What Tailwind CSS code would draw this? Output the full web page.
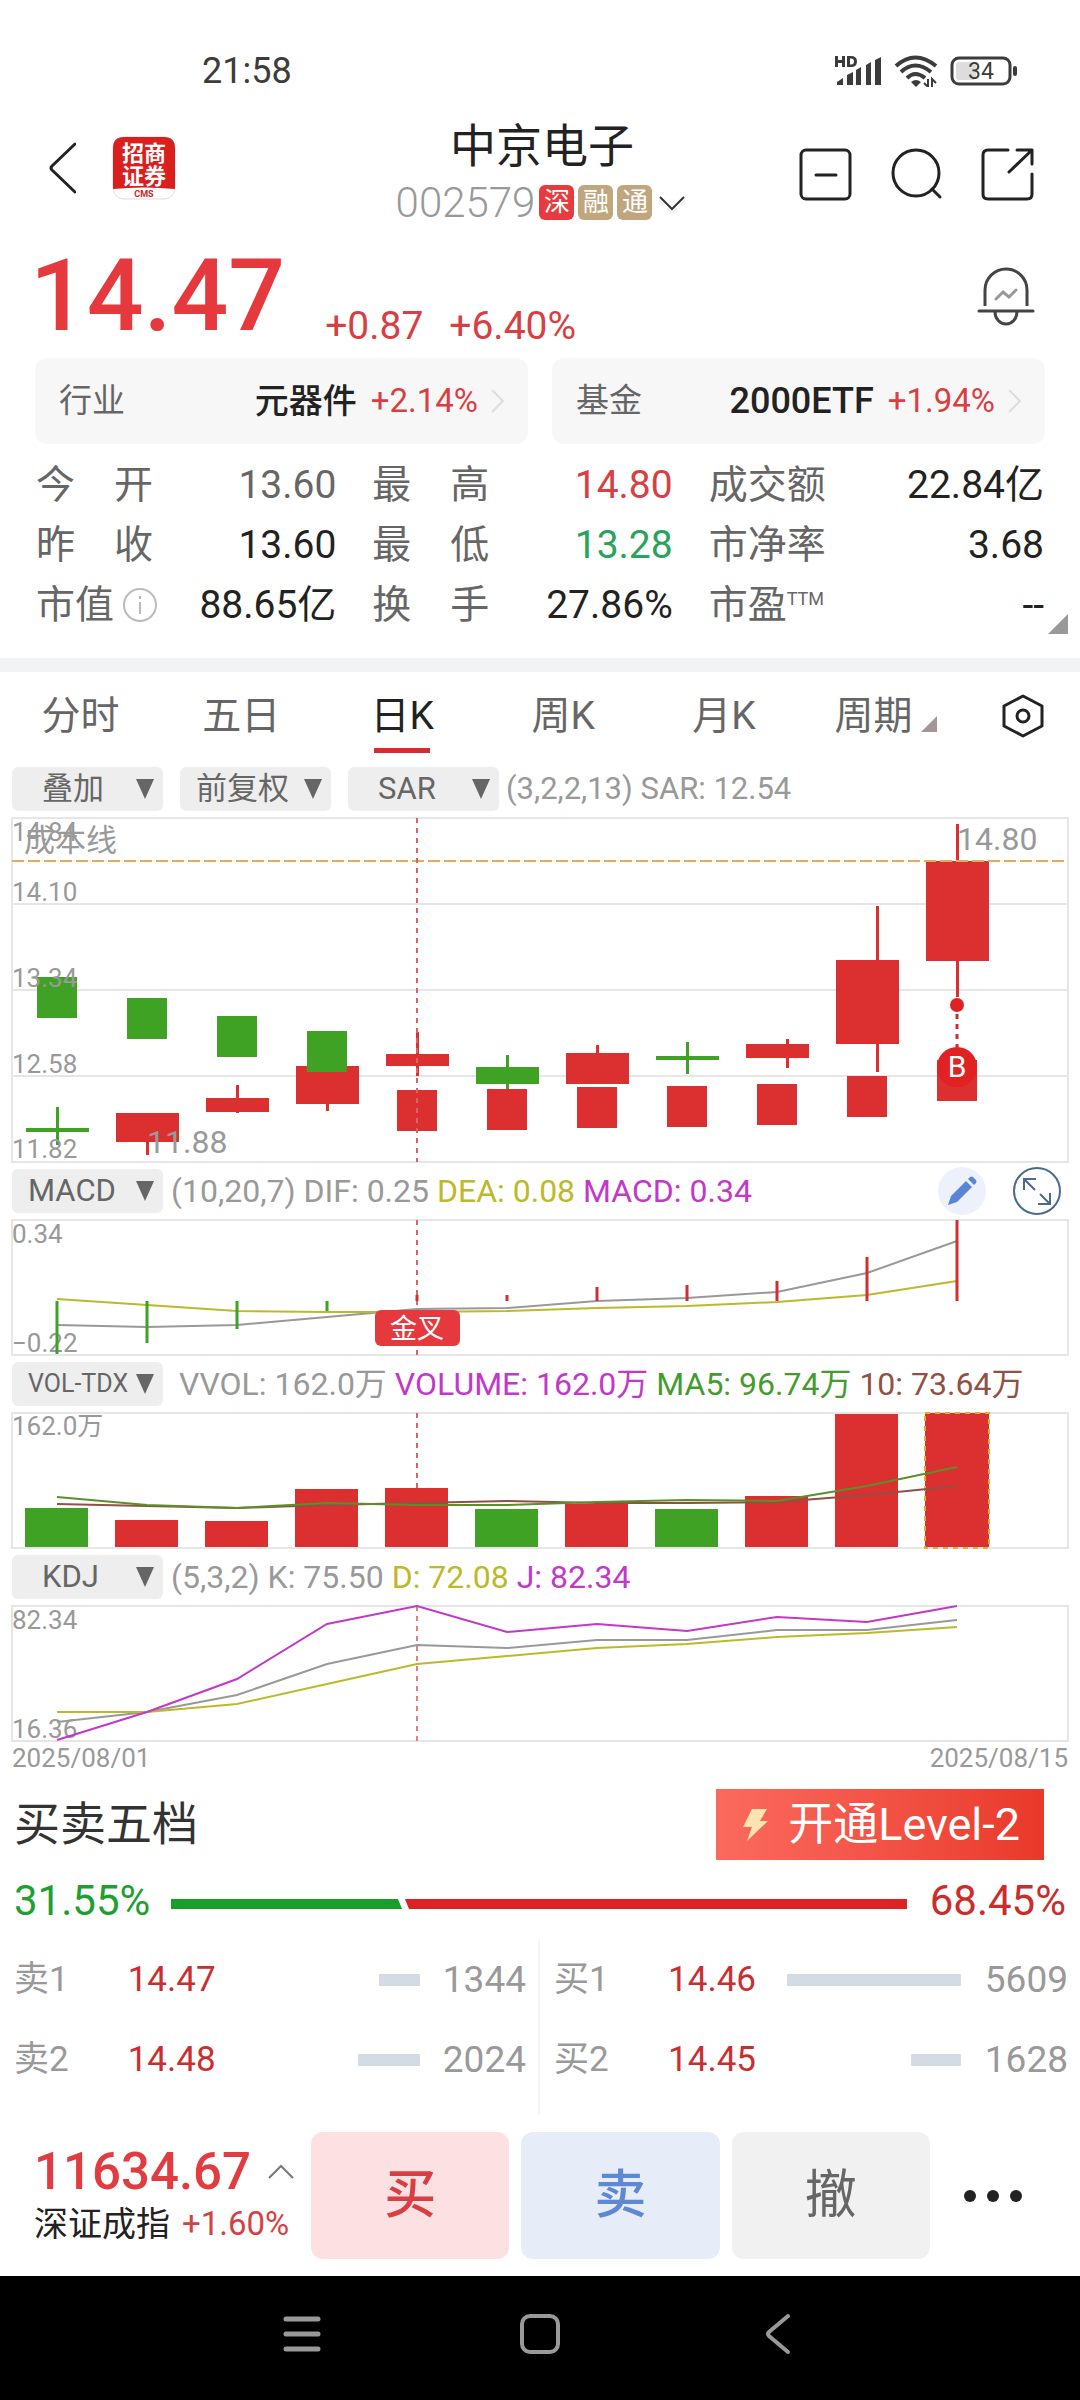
<!DOCTYPE html>
<html lang="zh-CN">
<head>
    <meta charset="UTF-8">
    <meta name="viewport" content="width=device-width, initial-scale=1.0">
    <title>中京电子 002579</title>
    <script src="https://cdn.jsdelivr.net/npm/@tailwindcss/browser@4"></script>
</head>
<body class="bg-white font-[Roboto,'Noto_Sans_CJK_SC',sans-serif] text-[#222]">
<div class="flex min-h-screen flex-col">

    <!-- 状态栏 -->
    <div class="flex h-[114px] items-center justify-between pt-7 pr-[60px] pl-[202px] text-[#3c3c3c]">
        <span class="text-4xl">21:58</span>
        <div class="flex items-center gap-3">
            <svg class="h-8 w-12" viewBox="0 0 48 32" fill="currentColor">
                <path d="M1 1h3v4h4V1h3v11H8V8H4v4H1zM13 1h4q6 0 6 5.500t-6 5.500h-4zM16 3.500v6h1q3 0 3-3t-3-3z"/>
                <path d="M3 30v-3l6-4v7zM13 30V20l6-3v13zM22 30V15l5-3v18zM32 30V10l5-3v23zM41 30V5l6-3v28z"/>
            </svg>
            <svg class="h-8 w-11" viewBox="0 0 44 32" fill="none" stroke="currentColor" stroke-width="4">
                <path d="M2 11q19-17 40 0M7 17q14-13 30 0M13 23q8-8 18 0"/>
                <path d="M17 27q5-4 10 0l-5 5z" fill="currentColor" stroke="none"/>
                <path d="M34 24v8l-4-4M38 32v-8l4 4" stroke-width="2"/>
            </svg>
            <svg class="h-8 w-[70px]" viewBox="0 0 70 32">
                <rect x="2" y="3" width="58" height="26" rx="7" fill="none" stroke="currentColor" stroke-width="3"/>
                <rect x="6" y="7" width="20" height="18" rx="3" fill="#ddd"/>
                <rect x="63" y="11" width="4" height="10" rx="2" fill="currentColor"/>
                <text x="31" y="24" text-anchor="middle" font-size="23" fill="currentColor">34</text>
            </svg>
        </div>
    </div>

    <!-- 顶部标题 -->
    <header class="grid h-30 grid-cols-[1fr_auto_1fr] items-center pr-11 pl-12">
        <div class="flex items-center gap-9 pb-3">
            <button type="button" aria-label="返回">
                <svg class="h-14 w-7" viewBox="0 0 28 56" fill="none" stroke="#222" stroke-width="3" stroke-linecap="round" stroke-linejoin="round"><path d="M27 4L4 26q-2 2 0 4l23 22"/></svg>
            </button>
            <svg class="size-16" viewBox="0 0 64 64" aria-label="招商证券">
                <rect x="1" y="1" width="62" height="62" rx="11" fill="#fff" stroke="#ddd"/>
                <path d="M1 53V12Q1 1 12 1h40q11 0 11 11v41q-31-3-62 0z" fill="#da1f1f"/>
                <text x="32" y="25" text-anchor="middle" font-size="22" font-weight="700" fill="#fff">招商</text>
                <text x="32" y="48" text-anchor="middle" font-size="22" font-weight="700" fill="#fff">证券</text>
                <text x="32" y="61" text-anchor="middle" font-size="9" font-weight="700" fill="#c22">CMS</text>
            </svg>
        </div>
        <div class="flex flex-col items-center">
            <h1 class="text-[46px] leading-14">中京电子</h1>
            <button type="button" class="flex h-14 items-center gap-1">
                <span class="text-[42px] font-light text-[#999]">002579</span>
                <span class="flex size-[35px] items-center justify-center rounded-md bg-[#e63c40] text-[26px] text-white">深</span>
                <span class="flex size-[35px] items-center justify-center rounded-md bg-[#bfa67e] text-[26px] text-white">融</span>
                <span class="flex size-[35px] items-center justify-center rounded-md bg-[#bfa67e] text-[26px] text-white">通</span>
                <svg class="h-7 w-8" viewBox="0 0 32 28" fill="none" stroke="#333" stroke-width="2"><path d="M4 9l12 12L28 9"/></svg>
            </button>
        </div>
        <div class="flex items-center justify-end gap-[35px]">
            <button type="button" aria-label="删自选">
                <svg class="size-14" viewBox="0 0 56 56" fill="none" stroke="#222" stroke-width="3" stroke-linecap="round"><rect x="3" y="4" width="49" height="49" rx="5"/><path d="M18 29h20"/></svg>
            </button>
            <button type="button" aria-label="搜索">
                <svg class="size-14" viewBox="0 0 56 56" fill="none" stroke="#222" stroke-width="3" stroke-linecap="round"><circle cx="27" cy="27" r="23"/><path d="M43 43l8 8"/></svg>
            </button>
            <button type="button" aria-label="分享">
                <svg class="size-14" viewBox="0 0 56 56" fill="none" stroke="#222" stroke-width="3" stroke-linecap="round" stroke-linejoin="round"><path d="M28 4H8q-5 0-5 5v39q0 5 5 5h39q5 0 5-5V28M37 4h15v14M52 4L29 26"/></svg>
            </button>
        </div>
    </header>

    <!-- 现价 -->
    <section class="flex h-[124px] items-center justify-between pr-11 pl-[30px]">
        <div class="flex items-end text-[#e6393e]">
            <strong class="text-[100px] leading-[124px] font-medium">14.47</strong>
            <span class="pb-2 pl-10 text-[39px] leading-12 text-[#d83f43]">+0.87</span>
            <span class="pb-2 pl-[26px] text-[39px] leading-12 text-[#d83f43]">+6.40%</span>
        </div>
        <button type="button" aria-label="预警">
            <svg class="h-15 w-[60px]" viewBox="0 0 60 60" fill="none" stroke="#444" stroke-width="3" stroke-linecap="round"><path d="M9 40V24a21 21 0 0 1 42 0v16" stroke-linecap="butt"/><path d="M3 45h54M19 46a11 12 0 0 0 22 0"/><path d="M20 33l7-7 6 5 7-7" stroke="#999"/></svg>
        </button>
    </section>

    <!-- 行业 / 基金 -->
    <section class="grid grid-cols-2 gap-6 px-[35px]">
        <a href="#" class="flex h-[86px] items-center rounded-xl bg-[#f7f7f7] pr-[22px] pl-6">
            <span class="mr-auto text-[33px] text-[#666]">行业</span>
            <span class="text-[34px] font-medium">元器件</span>
            <span class="pl-[14px] text-[33px] text-[#d83f43]">+2.14%</span>
            <svg class="ml-3 h-7 w-4" viewBox="0 0 16 28" fill="none" stroke="#ddd" stroke-width="2"><path d="M2 3l11 11L2 25"/></svg>
        </a>
        <a href="#" class="flex h-[86px] items-center rounded-xl bg-[#f7f7f7] pr-[22px] pl-6">
            <span class="mr-auto text-[33px] text-[#666]">基金</span>
            <span class="text-[36px] font-medium">2000ETF</span>
            <span class="pl-[14px] text-[33px] text-[#d83f43]">+1.94%</span>
            <svg class="ml-3 h-7 w-4" viewBox="0 0 16 28" fill="none" stroke="#ddd" stroke-width="2"><path d="M2 3l11 11L2 25"/></svg>
        </a>
    </section>

    <!-- 行情指标 -->
    <section class="relative px-9 pt-[11px] pb-[23px]">
        <dl class="grid grid-cols-[301fr_301fr_336fr] gap-x-9 text-[39px] leading-[60px]">
            <div class="flex justify-between"><dt class="flex w-[117px] justify-between text-[#666]"><span>今</span><span>开</span></dt><dd class="text-[#666]">13.60</dd></div>
            <div class="flex justify-between"><dt class="flex w-[117px] justify-between text-[#666]"><span>最</span><span>高</span></dt><dd class="text-[#d83f43]">14.80</dd></div>
            <div class="flex justify-between"><dt class="text-[#666]">成交额</dt><dd>22.84亿</dd></div>
            <div class="flex justify-between"><dt class="flex w-[117px] justify-between text-[#666]"><span>昨</span><span>收</span></dt><dd>13.60</dd></div>
            <div class="flex justify-between"><dt class="flex w-[117px] justify-between text-[#666]"><span>最</span><span>低</span></dt><dd class="text-[#27a35c]">13.28</dd></div>
            <div class="flex justify-between"><dt class="text-[#666]">市净率</dt><dd>3.68</dd></div>
            <div class="flex justify-between">
                <dt class="flex items-center gap-2 text-[#666]">市值
                    <svg class="size-9" viewBox="0 0 36 36" fill="none" stroke="#bbb" stroke-width="2"><circle cx="18" cy="18" r="16"/><path d="M18 15v12M18 9v3"/></svg>
                </dt>
                <dd>88.65亿</dd>
            </div>
            <div class="flex justify-between"><dt class="flex w-[117px] justify-between text-[#666]"><span>换</span><span>手</span></dt><dd>27.86%</dd></div>
            <div class="flex justify-between"><dt class="flex text-[#666]">市盈<span class="text-[18px] leading-12">TTM</span></dt><dd>--</dd></div>
        </dl>
        <svg class="absolute right-3 bottom-6 size-5" viewBox="0 0 20 20"><path d="M20 0v20H0z" fill="#999"/></svg>
    </section>

    <div class="h-[14px] bg-[#f2f3f5]"></div>

    <!-- 周期切换 -->
    <nav class="flex h-[88px] text-[39px] text-[#666]">
        <button type="button" class="w-[14.9%]">分时</button>
        <button type="button" class="w-[14.9%]">五日</button>
        <button type="button" class="relative w-[14.9%] text-[#222]">日K<span class="absolute bottom-[7px] left-1/2 h-[5px] w-14 -translate-x-1/2 bg-[#d92b2b]"></span></button>
        <button type="button" class="w-[14.9%]">周K</button>
        <button type="button" class="w-[14.9%]">月K</button>
        <button type="button" class="flex flex-1 items-center justify-center gap-2">周期
            <svg class="mt-4 size-4" viewBox="0 0 16 16"><path d="M16 0v16H0z" fill="#a39797"/></svg>
        </button>
        <button type="button" class="flex w-[10.5%] items-center justify-center" aria-label="设置">
            <svg class="size-12" viewBox="0 0 48 48" fill="none" stroke="#222" stroke-width="3" stroke-linejoin="round"><path d="M24 4l19 10v20L24 44 5 34V14z"/><circle cx="24" cy="24" r="6"/></svg>
        </button>
    </nav>

    <!-- K线与指标 -->
    <section class="flex flex-col gap-[7px] px-3 pt-[7px] text-[32px] text-[#999]">
        <div class="flex h-11 items-center gap-[17px] leading-11">
            <label class="grid w-[151px] items-center rounded-md bg-[#eee] text-[31px] text-[#666]">
                <select aria-label="叠加" class="col-start-1 row-start-1 h-11 appearance-none pl-[30px]"><option>叠加</option></select>
                <svg class="pointer-events-none col-start-1 row-start-1 mr-2 h-5 w-5 justify-self-end" viewBox="0 0 20 20"><path d="M1 0h18l-9 20z" fill="#666"/></svg>
            </label>
            <label class="grid w-[151px] items-center rounded-md bg-[#eee] text-[31px] text-[#666]">
                <select aria-label="复权" class="col-start-1 row-start-1 h-11 appearance-none pl-4"><option>前复权</option></select>
                <svg class="pointer-events-none col-start-1 row-start-1 mr-2 h-5 w-5 justify-self-end" viewBox="0 0 20 20"><path d="M1 0h18l-9 20z" fill="#666"/></svg>
            </label>
            <label class="grid w-[151px] items-center rounded-md bg-[#eee] text-[31px] text-[#666]">
                <select aria-label="主图指标" class="col-start-1 row-start-1 h-11 appearance-none pl-[30px]"><option>SAR</option></select>
                <svg class="pointer-events-none col-start-1 row-start-1 mr-2 h-5 w-5 justify-self-end" viewBox="0 0 20 20"><path d="M1 0h18l-9 20z" fill="#666"/></svg>
            </label>
            <p class="-ml-[10px] text-[31px]">(3,2,2,13) SAR: 12.54</p>
        </div>

        <!-- 主图 -->
        <svg class="w-full overflow-visible" viewBox="0 0 1056 344">
            <g fill="none" stroke="#e6e6e6" stroke-width="2">
                <rect width="1056" height="344"/>
                <path d="M0 86h1056M0 172h1056M0 258h1056"/>
            </g>
            <g fill="#dc2f30">
                <path d="M104 295h63v29h-63zM194 280h63v14h-63zM284 248h63v38h-63zM374 236h63v12h-63zM554 235h63v31h-63zM734 226h63v14h-63zM824 142h63v84h-63zM914 43h63v100h-63z"/>
                <path d="M134 295h3v42h-3zM224 267h3v28h-3zM314 248h3v45h-3zM404 214h3v44h-3zM584 227h3v38h-3zM774 221h3v29h-3zM864 88h3v166h-3zM944 6h3v173h-3z"/>
                <path d="M385 272h40v41h-40zM475 271h40v41h-40zM565 269h40v41h-40zM655 268h40v41h-40zM745 266h40v41h-40zM835 258h40v41h-40zM925 242h40v41h-40z"/>
            </g>
            <g fill="#3fa225">
                <path d="M14 310h63v4H14zM464 249h63v17h-63zM644 238h63v4h-63zM44 289h3v38h-3zM494 237h3v34h-3zM674 224h3v32h-3z"/>
                <path d="M25 159h40v41H25zM115 180h40v41h-40zM205 198h40v41h-40zM295 213h40v41h-40z"/>
            </g>
            <path d="M0 43h1052" stroke="#e3ac5f" stroke-width="2" stroke-dasharray="12 4"/>
            <path d="M405 0v344" stroke="#d86464" stroke-width="2" stroke-dasharray="5 5"/>
            <path d="M945 196v34" stroke="#c8302f" stroke-width="3" stroke-dasharray="5 5"/>
            <circle cx="945" cy="187" r="7" fill="#e02222"/>
            <circle cx="945" cy="249" r="20" fill="#e02222"/>
            <text x="945" y="259" text-anchor="middle" font-size="30" fill="#fff">B</text>
            <g fill="#999" font-size="26">
                <text x="0" y="23">14.84</text>
                <text x="0" y="83">14.10</text>
                <text x="0" y="169">13.34</text>
                <text x="0" y="255">12.58</text>
                <text x="0" y="340">11.82</text>
            </g>
            <g fill="#999" font-size="32">
                <text x="12" y="33" font-size="31">成本线</text>
                <text x="135" y="335">11.88</text>
                <text x="945" y="32">14.80</text>
            </g>
        </svg>

        <div class="flex h-11 items-center gap-2 leading-11">
            <label class="grid w-[151px] items-center rounded-md bg-[#eee] text-[31px] text-[#666]">
                <select aria-label="副图指标一" class="col-start-1 row-start-1 h-11 appearance-none pl-4"><option>MACD</option></select>
                <svg class="pointer-events-none col-start-1 row-start-1 mr-2 h-5 w-5 justify-self-end" viewBox="0 0 20 20"><path d="M1 0h18l-9 20z" fill="#666"/></svg>
            </label>
            <p>(10,20,7) DIF: 0.25 <span class="text-[#bdb92a]">DEA: 0.08</span> <span class="text-[#c238c8]">MACD: 0.34</span></p>
            <div class="mr-[6px] ml-auto flex gap-[25px]">
                <button type="button" aria-label="画线">
                    <svg class="size-[50px]" viewBox="0 0 50 50"><circle cx="25" cy="25" r="24" fill="#ecf1fb"/><path d="M11 39l3-9L29 15l6 6-15 15zM31 13l2-2q2-1 3 0l3 3q1 2 0 3l-2 2z" fill="#5b86d6"/></svg>
                </button>
                <button type="button" aria-label="全屏">
                    <svg class="size-[50px]" viewBox="0 0 50 50" fill="none" stroke="#4b6b8c" stroke-width="2"><circle cx="25" cy="25" r="23"/><path d="M23 24L12 13M12 24V13h12M28 28l10 10M26 38h12V27"/></svg>
                </button>
            </div>
        </div>

        <!-- MACD -->
        <svg class="w-full overflow-visible" viewBox="0 0 1056 135">
            <rect width="1056" height="135" fill="none" stroke="#e6e6e6" stroke-width="2"/>
            <text x="0" y="23" font-size="26" fill="#999">0.34</text>
            <text x="0" y="132" font-size="26" fill="#999">−0.22</text>
            <path d="M405 0v135" stroke="#d86464" stroke-width="2" stroke-dasharray="5 5"/>
            <g fill="none" stroke-width="2">
                <path d="M45 105L135 107 225 105 315 97 405 89 495 88 585 81 675 78 765 72 855 53 945 21" stroke="#999"/>
                <path d="M45 79L135 85 225 91 315 92 405 92 495 91 585 88 675 86 765 82 855 75 945 61" stroke="#bdb92a"/>
            </g>
            <g fill="none" stroke-width="3">
                <path d="M45 81v53M135 81v42M225 81v28M315 81v10" stroke="#3fa225"/>
                <path d="M405 81v-6M495 81v-6M585 81V67M675 81V65M765 81V61M855 81V37M945 81V0" stroke="#d03030"/>
            </g>
            <rect x="363" y="90" width="85" height="36" rx="6" fill="#e6393e"/>
            <text x="405" y="118" text-anchor="middle" font-size="27" fill="#fff">金叉</text>
        </svg>

        <div class="flex h-11 items-center gap-4 leading-11">
            <label class="grid w-[151px] items-center rounded-md bg-[#eee] text-[25px] text-[#666]">
                <select aria-label="副图指标二" class="col-start-1 row-start-1 h-11 appearance-none pl-4"><option>VOL-TDX</option></select>
                <svg class="pointer-events-none col-start-1 row-start-1 mr-2 h-5 w-5 justify-self-end" viewBox="0 0 20 20"><path d="M1 0h18l-9 20z" fill="#666"/></svg>
            </label>
            <p>VVOL: 162.0万 <span class="text-[#c238c8]">VOLUME: 162.0万</span> <span class="text-[#459b2e]">MA5: 96.74万</span> <span class="text-[#8f5143]">10: 73.64万</span></p>
        </div>

        <!-- 成交量 -->
        <svg class="w-full overflow-visible" viewBox="0 0 1056 135">
            <rect width="1056" height="135" fill="none" stroke="#e6e6e6" stroke-width="2"/>
            <text x="0" y="22" font-size="26" fill="#999">162.0万</text>
            <path d="M405 0v75" stroke="#d86464" stroke-width="2" stroke-dasharray="5 5"/>
            <path d="M13 95h63v39H13zM463 96h63v38h-63zM643 96h63v38h-63z" fill="#3fa225"/>
            <path d="M103 107h63v27h-63zM193 108h63v26h-63zM283 76h63v58h-63zM373 75h63v59h-63zM553 91h63v43h-63zM733 83h63v51h-63zM823 1h63v133h-63zM913 0h64v134h-64z" fill="#dc2f30"/>
            <rect x="913" y="0" width="64" height="135" fill="none" stroke="#dfae35" stroke-width="2" stroke-dasharray="5 5"/>
            <g fill="none" stroke-width="2">
                <path d="M45 91L135 93 225 95 315 92 405 90 495 88 585 90 675 90 765 89 855 82 945 73" stroke="#8f5143"/>
                <path d="M45 84L135 92 225 95 315 90 405 92 495 92 585 89 675 87 765 88 855 73 945 54" stroke="#5c8f2a"/>
            </g>
        </svg>

        <div class="flex h-11 items-center gap-2 leading-11">
            <label class="grid w-[151px] items-center rounded-md bg-[#eee] text-[31px] text-[#666]">
                <select aria-label="副图指标三" class="col-start-1 row-start-1 h-11 appearance-none pl-[30px]"><option>KDJ</option></select>
                <svg class="pointer-events-none col-start-1 row-start-1 mr-2 h-5 w-5 justify-self-end" viewBox="0 0 20 20"><path d="M1 0h18l-9 20z" fill="#666"/></svg>
            </label>
            <p>(5,3,2) K: 75.50 <span class="text-[#bdb92a]">D: 72.08</span> <span class="text-[#c238c8]">J: 82.34</span></p>
        </div>

        <!-- KDJ -->
        <div>
            <svg class="w-full overflow-visible" viewBox="0 0 1056 135">
                <rect width="1056" height="135" fill="none" stroke="#e6e6e6" stroke-width="2"/>
                <text x="0" y="23" font-size="26" fill="#999">82.34</text>
                <text x="0" y="132" font-size="26" fill="#999">16.36</text>
                <path d="M405 0v135" stroke="#e08080" stroke-width="2" stroke-dasharray="5 5"/>
                <g fill="none" stroke-width="2">
                    <path d="M45 116L135 106 225 89 315 58 405 39 495 42 585 34 675 34 765 24 855 24 945 14" stroke="#999"/>
                    <path d="M45 106L135 106 225 98 315 78 405 58 495 50 585 42 675 38 765 31 855 27 945 21" stroke="#bdb92a"/>
                    <path d="M45 134L135 106 225 73 315 18 405 0 495 26 585 18 675 25 765 11 855 16 945 0" stroke="#c238c8"/>
                </g>
            </svg>
            <div class="flex justify-between text-[26px] leading-[34px]"><span>2025/08/01</span><span>2025/08/15</span></div>
        </div>
    </section>

    <!-- 买卖五档 -->
    <section class="pt-[14px]">
        <div class="flex items-center justify-between pr-9 pl-[14px]">
            <h2 class="text-[46px] text-[#333]">买卖五档</h2>
            <button type="button" class="flex h-[71px] items-center gap-4 bg-linear-to-r from-[#fb6a5e] to-[#e93829] px-6 text-[45px] text-white">
                <svg class="h-9 w-8" viewBox="0 0 32 36"><path d="M12 2h15l-7 12h8L7 34l5-14H3z" fill="#ffe3b3"/></svg>
                开通Level-2
            </button>
        </div>
        <div class="flex h-20 items-center pr-[14px] pl-[14px] text-[42px]">
            <span class="w-[157px] text-[#1f9f30]">31.55%</span>
            <svg class="mt-2 h-[10px] flex-1" viewBox="0 0 736 10" preserveAspectRatio="none"><path d="M0 0h227l4 10H0z" fill="#189d28"/><path d="M234 0h502v10H238z" fill="#dc2222"/></svg>
            <span class="w-[159px] text-right text-[#cb2c2c]">68.45%</span>
        </div>
        <div class="grid grid-cols-2 text-[35px] text-[#999]">
            <table class="h-[175px] table-fixed border-r-2 border-[#f4f4f4]" aria-label="卖盘">
                <tbody id="asks"></tbody>
            </table>
            <table class="h-[175px] table-fixed" aria-label="买盘">
                <tbody id="bids"></tbody>
            </table>
        </div>
    </section>

    <!-- 底部操作栏 -->
    <footer class="mt-auto flex items-center gap-3 py-[17px] pr-12 pl-[34px]">
        <a href="#" class="w-[265px]">
            <span class="flex items-center gap-4 text-[51px] leading-14 font-medium text-[#e23b40]">11634.67
                <svg class="h-5 w-7" viewBox="0 0 28 20" fill="none" stroke="#777" stroke-width="2"><path d="M2 16L14 4l12 12"/></svg>
            </span>
            <span class="flex items-center gap-3 text-[34px] leading-12 whitespace-nowrap">深证成指 <span class="text-[33px] text-[#d83f43]">+1.60%</span></span>
        </a>
        <button type="button" class="h-[127px] flex-1 rounded-xl bg-[#fde1e2] text-[52px] font-medium text-[#d83f43]">买</button>
        <button type="button" class="h-[127px] flex-1 rounded-xl bg-[#e6edf9] text-[52px] font-medium text-[#5f88d2]">卖</button>
        <button type="button" class="h-[127px] flex-1 rounded-xl bg-[#f1f1f1] text-[52px] text-[#666]">撤</button>
        <button type="button" class="ml-5" aria-label="更多">
            <svg class="h-4 w-[70px]" viewBox="0 0 70 16" fill="#222"><circle cx="8" cy="8" r="6"/><circle cx="31" cy="8" r="6"/><circle cx="54" cy="8" r="6"/></svg>
        </button>
    </footer>

    <!-- 系统导航 -->
    <div class="grid h-[124px] grid-cols-3 items-center bg-black px-[17%] pb-2">
        <svg class="size-12 justify-self-center" viewBox="0 0 48 48" fill="none" stroke="#999" stroke-width="5" stroke-linecap="round"><path d="M8 9h32M8 24h32M8 39h32"/></svg>
        <svg class="size-12 justify-self-center" viewBox="0 0 48 48" fill="none" stroke="#999" stroke-width="4"><rect x="6" y="6" width="36" height="36" rx="8"/></svg>
        <svg class="size-12 justify-self-center" viewBox="0 0 48 48" fill="none" stroke="#999" stroke-width="4" stroke-linecap="round"><path d="M34 6L15 22q-2 2 0 4l19 16"/></svg>
    </div>
</div>

<script>
    const asks = [['卖1', '14.47', 1344], ['卖2', '14.48', 2024]];
    const bids = [['买1', '14.46', 5609], ['买2', '14.45', 1628]];

    // 柱宽按最大挂单量折算
    function renderRows(id, rows) {
        document.getElementById(id).innerHTML = rows.map(([label, price, volume]) => `
            <tr class="h-20">
                <th scope="row" class="w-[18%] pl-[14px] text-left font-normal">${label}</th>
                <td class="w-[22%] text-right text-[#c92f2f]">${price}</td>
                <td class="w-[38%]"><div class="ml-auto h-3 bg-[#d3dbe5]" style="width: ${volume / 5609 * 85}%"></div></td>
                <td class="pr-3 text-right text-[37px]">${volume}</td>
            </tr>`).join('') + '<tr><td colspan="4"></td></tr>';
    }

    renderRows('asks', asks);
    renderRows('bids', bids);
</script>
</body>
</html>
